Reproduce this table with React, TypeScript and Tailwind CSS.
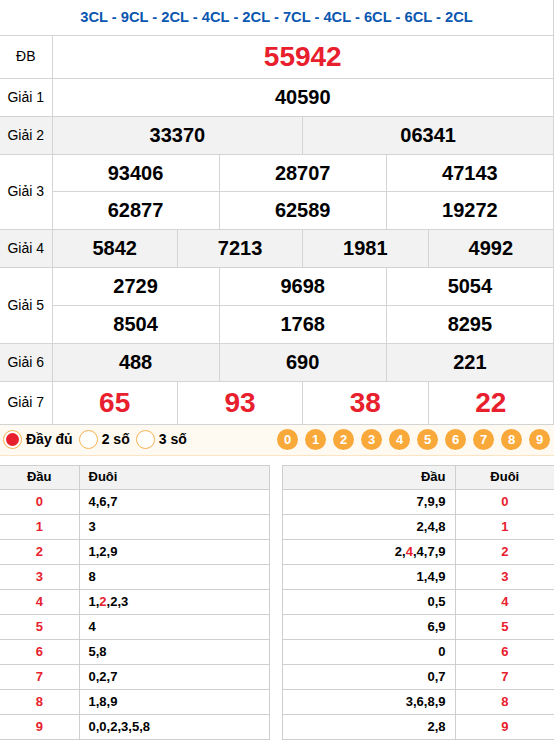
import React from "react";

type Prize = { label: string; rows: string[][]; tone?: "gray"; big?: boolean; red?: boolean; h: string };

const prizes: Prize[] = [
  { label: "ĐB", rows: [["55942"]], big: true, red: true, h: "h-[43px]" },
  { label: "Giải 1", rows: [["40590"]], h: "h-[38px]" },
  { label: "Giải 2", rows: [["33370", "06341"]], tone: "gray", h: "h-[38px]" },
  { label: "Giải 3", rows: [["93406", "28707", "47143"], ["62877", "62589", "19272"]], h: "h-[37.5px]" },
  { label: "Giải 4", rows: [["5842", "7213", "1981", "4992"]], tone: "gray", h: "h-[38px]" },
  { label: "Giải 5", rows: [["2729", "9698", "5054"], ["8504", "1768", "8295"]], h: "h-[38px]" },
  { label: "Giải 6", rows: [["488", "690", "221"]], tone: "gray", h: "h-[38px]" },
  { label: "Giải 7", rows: [["65", "93", "38", "22"]], big: true, red: true, h: "h-[43px]" },
];

// [head, tails, highlighted tail index]
const heads: [string, string[], number?][] = [
  ["0", ["4", "6", "7"]],
  ["1", ["3"]],
  ["2", ["1", "2", "9"]],
  ["3", ["8"]],
  ["4", ["1", "2", "2", "3"], 1],
  ["5", ["4"]],
  ["6", ["5", "8"]],
  ["7", ["0", "2", "7"]],
  ["8", ["1", "8", "9"]],
  ["9", ["0", "0", "2", "3", "5", "8"]],
];

const tails: [string, string[], number?][] = [
  ["0", ["7", "9", "9"]],
  ["1", ["2", "4", "8"]],
  ["2", ["2", "4", "4", "7", "9"], 1],
  ["3", ["1", "4", "9"]],
  ["4", ["0", "5"]],
  ["5", ["6", "9"]],
  ["6", ["0"]],
  ["7", ["0", "7"]],
  ["8", ["3", "6", "8", "9"]],
  ["9", ["2", "8"]],
];

function Digits({ list, mark }: { list: string[]; mark?: number }) {
  return (
    <>
      {list.map((d, i) => (
        <span key={i}>
          {i > 0 && ","}
          <span className={i === mark ? "text-[#e8202d]" : ""}>{d}</span>
        </span>
      ))}
    </>
  );
}

function Radio({ checked, label }: { checked?: boolean; label: string }) {
  return (
    <div className="flex items-center gap-[4px]">
      <span className="flex size-[19px] items-center justify-center rounded-full border border-[#f6b14f] bg-white">
        {checked && <span className="size-[13px] rounded-full bg-[#e8202d]" />}
      </span>
      <span className="text-[14px] font-bold text-black">{label}</span>
    </div>
  );
}

export default function App() {
  const spanFor = (n: number) => 12 / n;

  return (
    <div className="w-[554px] bg-white font-['Liberation_Sans',Arial,sans-serif] text-black">
      <table className="w-full table-fixed border-collapse">
        <colgroup>
          <col className="w-[52px]" />
          {Array.from({ length: 12 }).map((_, i) => (
            <col key={i} />
          ))}
        </colgroup>
        <tbody>
          <tr className="h-[35px]">
            <td colSpan={13} className="border-r border-b border-[#d4d4d4] text-center text-[14.7px] font-bold text-[#0b57b0]">
              3CL - 9CL - 2CL - 4CL - 2CL - 7CL - 4CL - 6CL - 6CL - 2CL
            </td>
          </tr>
          {prizes.map((p) =>
            p.rows.map((row, ri) => (
              <tr key={p.label + ri} className={`${p.h} ${p.tone === "gray" ? "bg-[#f2f2f2]" : ""}`}>
                {ri === 0 && (
                  <td rowSpan={p.rows.length} className="border border-l-0 border-[#d4d4d4] text-center text-[14px]">
                    {p.label}
                  </td>
                )}
                {row.map((n, ci) => (
                  <td
                    key={ci}
                    colSpan={spanFor(row.length)}
                    className={`border border-[#d4d4d4] text-center font-bold ${
                      p.big ? "text-[28px]" : "text-[20px]"
                    } ${p.red ? "text-[#e8202d]" : ""}`}
                  >
                    {n}
                  </td>
                ))}
              </tr>
            ))
          )}
        </tbody>
      </table>

      <div className="flex h-[31px] items-center justify-between border-b border-[#fbe4c4] bg-[#fffaf1] pr-[4px] pl-[3px]">
        <div className="flex items-center gap-[6px]">
          <Radio checked label="Đầy đủ" />
          <Radio label="2 số" />
          <Radio label="3 số" />
        </div>
        <div className="flex items-center gap-[7px]">
          {Array.from({ length: 10 }).map((_, i) => (
            <span
              key={i}
              className="flex size-[21px] items-center justify-center rounded-full bg-[#f8a93a] text-[13px] font-bold text-white"
            >
              {i}
            </span>
          ))}
        </div>
      </div>

      <div className="mt-[9px] flex justify-between">
        <table className="w-[270px] table-fixed border-collapse text-[13px] font-bold">
          <colgroup>
            <col className="w-[79px]" />
            <col />
          </colgroup>
          <thead>
            <tr className="h-[24px] bg-[#f2f2f2]">
              <th className="border border-l-0 border-[#cfcfcf] text-center">Đầu</th>
              <th className="border border-[#cfcfcf] pl-[9px] text-left">Đuôi</th>
            </tr>
          </thead>
          <tbody>
            {heads.map(([h, list, mark]) => (
              <tr key={h} className="h-[25px]">
                <td className="border border-l-0 border-[#cfcfcf] text-center text-[#e8202d]">{h}</td>
                <td className="border border-[#cfcfcf] pl-[9px]">
                  <Digits list={list} mark={mark} />
                </td>
              </tr>
            ))}
          </tbody>
        </table>

        <table className="w-[272px] table-fixed border-collapse text-[13px] font-bold">
          <colgroup>
            <col />
            <col className="w-[99px]" />
          </colgroup>
          <thead>
            <tr className="h-[24px] bg-[#f2f2f2]">
              <th className="border border-[#cfcfcf] pr-[9px] text-right">Đầu</th>
              <th className="border border-r-0 border-[#cfcfcf] text-center">Đuôi</th>
            </tr>
          </thead>
          <tbody>
            {tails.map(([t, list, mark]) => (
              <tr key={t} className="h-[25px]">
                <td className="border border-[#cfcfcf] pr-[9px] text-right">
                  <Digits list={list} mark={mark} />
                </td>
                <td className="border border-r-0 border-[#cfcfcf] text-center text-[#e8202d]">{t}</td>
              </tr>
            ))}
          </tbody>
        </table>
      </div>
    </div>
  );
}
